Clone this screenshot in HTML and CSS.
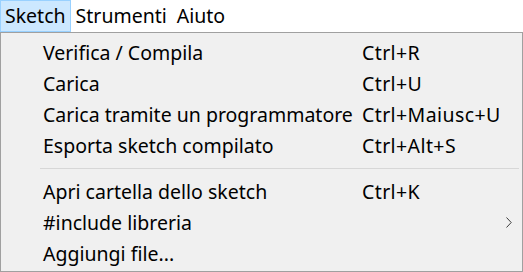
FILE: index.html
```html
<!DOCTYPE html>
<html lang="it">
<head>
  <meta charset="UTF-8" />
  <meta name="viewport" content="width=device-width, initial-scale=1.0"/>
  <title>Sketch</title>
  <link rel="stylesheet" href="styles.css">
</head>
<body>
  <nav class="menubar">
    <span class="menubar-item attivo">Sketch</span>
    <span class="menubar-item">Strumenti</span>
    <span class="menubar-item">Aiuto</span>
  </nav>

  <ul class="menu">
    <li class="voce"><span class="etichetta">Verifica / Compila</span><span class="tasti">Ctrl+R</span></li>
    <li class="voce"><span class="etichetta">Carica</span><span class="tasti">Ctrl+U</span></li>
    <li class="voce"><span class="etichetta">Carica tramite un programmatore</span><span class="tasti">Ctrl+Maiusc+U</span></li>
    <li class="voce"><span class="etichetta">Esporta sketch compilato</span><span class="tasti">Ctrl+Alt+S</span></li>
    <li class="separatore"></li>
    <li class="voce"><span class="etichetta">Apri cartella dello sketch</span><span class="tasti">Ctrl+K</span></li>
    <li class="voce">
      <span class="etichetta">#include libreria</span><span class="tasti"></span>
      <span class="freccia">
        <svg width="6" height="11" viewBox="0 0 6 11"><path d="M0.5 0.5 L5.2 5.5 L0.5 10.5" fill="none" stroke="#3c3c3c" stroke-width="1"/></svg>
      </span>
    </li>
    <li class="voce"><span class="etichetta">Aggiungi file...</span><span class="tasti"></span></li>
  </ul>
</body>
</html>
```

FILE: styles.css
```css
:root {
  --sfondo-menu: #f0f0f0;
  --bordo-menu: #a0a0a0;
  --evidenziato: #cce8ff;
  --evidenziato-bordo: #99d1ff;
  --testo: #000;
}

* {
  box-sizing: border-box;
  margin: 0;
  padding: 0;
}

body {
  font-family: "Segoe UI", "Noto Sans", sans-serif;
  font-size: 19.5px;
  color: var(--testo);
  background: #fff;
  width: 523px;
  height: 272px;
  overflow: hidden;
}

.menubar {
  display: flex;
  height: 32px;
  background: #fff;
}

.menubar-item {
  padding: 0 4px 0 4px;
  line-height: 30px;
  border: 1px solid transparent;
}

.menubar-item.attivo {
  background: var(--evidenziato);
  border-color: var(--evidenziato-bordo);
}

.menu {
  list-style: none;
  height: 240px;
  background: var(--sfondo-menu);
  border: 1px solid var(--bordo-menu);
  padding: 4px 0 2px;
}

.voce {
  display: flex;
  align-items: center;
  height: 31px;
  line-height: 31px;
  white-space: nowrap;
}

.etichetta {
  width: 361px;
  padding-left: 42px;
}

.tasti {
  flex: 1;
  letter-spacing: 0.4px;
}

.freccia {
  display: flex;
  align-items: center;
  width: 16px;
  height: 31px;
}

.separatore {
  height: 1px;
  margin: 7px 3px 7px 39px;
  background: #d7d7d7;
}
```
